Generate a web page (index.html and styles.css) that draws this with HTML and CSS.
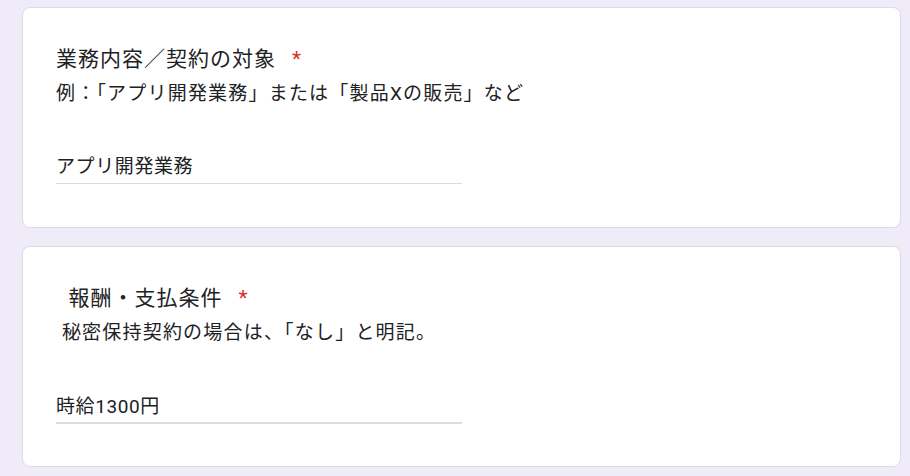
FILE: index.html
```html
<!doctype html>
<html lang="ja">
<head>
    <meta charset="utf-8">
    <title>フォーム</title>
    <link rel="stylesheet" href="styles.css">
</head>
<body>
    <div class="form-list">
        <div class="question-card">
            <div class="question-title">業務内容／契約の対象<span class="required">*</span></div>
            <div class="question-help">例：「アプリ開発業務」または「製品Xの販売」など</div>
            <div class="answer">アプリ開発業務</div>
        </div>
        <div class="question-card">
            <div class="question-title">  報酬・支払条件<span class="required">*</span></div>
            <div class="question-help"> 秘密保持契約の場合は、「なし」と明記。</div>
            <div class="answer answer-active">時給1300円</div>
        </div>
    </div>
</body>
</html>
```

FILE: styles.css
```css
body {
    margin: 0;
    background-color: #f0ebf8;
    font-family: Roboto, "Noto Sans CJK JP", sans-serif;
    color: #202124;
}
.form-list {
    display: flex;
    flex-direction: column;
    gap: 18px;
    padding: 7px 9px 0 22px;
}
.question-card {
    background-color: #ffffff;
    border: 1px solid #dadce0;
    border-radius: 8px;
    padding: 37px 24px 0 33px;
    height: 221px;
    box-sizing: border-box;
}
.question-title {
    font-size: 21px;
    line-height: 28px;
    letter-spacing: 1px;
    white-space: pre-wrap;
}
.required {
    color: #d93025;
    margin-left: 16px;
}
.question-help {
    margin-top: 8px;
    font-size: 19px;
    line-height: 26px;
    letter-spacing: 1.2px;
    white-space: pre-wrap;
}
.answer {
    margin-top: 47px;
    width: 406px;
    font-size: 19px;
    line-height: 26px;
    letter-spacing: 0.6px;
    padding-bottom: 3px;
    border-bottom: 1px solid #dadce0;
}
.answer-active {
    margin-top: 48px;
    border-bottom-width: 2px;
    padding-bottom: 2px;
}
```
